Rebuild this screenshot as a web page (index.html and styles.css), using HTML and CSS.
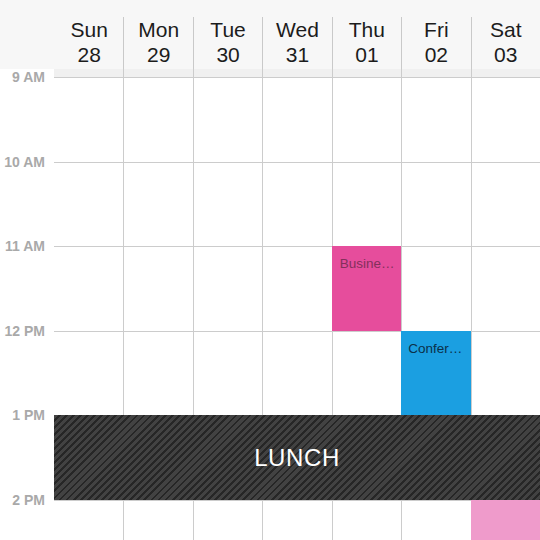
FILE: index.html
```html
<!DOCTYPE html>
<html>
<head>
<meta charset="utf-8">
<link rel="stylesheet" href="styles.css">
</head>
<body>
<div class="cal">
  <div class="header">
    <div class="corner"></div>
    <div class="day first"><span>Sun</span><span>28</span></div>
    <div class="day"><span>Mon</span><span>29</span></div>
    <div class="day"><span>Tue</span><span>30</span></div>
    <div class="day"><span>Wed</span><span>31</span></div>
    <div class="day"><span>Thu</span><span>01</span></div>
    <div class="day"><span>Fri</span><span>02</span></div>
    <div class="day"><span>Sat</span><span>03</span></div>
  </div>
  <div class="body">
    <div class="times">
      <div class="time">9 AM</div>
      <div class="time">10 AM</div>
      <div class="time">11 AM</div>
      <div class="time">12 PM</div>
      <div class="time">1 PM</div>
      <div class="time">2 PM</div>
    </div>
    <div class="grid">
      <div class="band"><i></i><i></i><i></i><i></i><i></i><i></i><i></i></div>
      <div class="row"><i></i><i></i><i></i><i></i><i></i><i></i><i></i></div>
      <div class="row"><i></i><i></i><i></i><i></i><i></i><i></i><i></i></div>
      <div class="row"><i></i><i></i><i></i><i></i><i></i><i></i><i></i></div>
      <div class="row"><i></i><i></i><i></i><i></i><i></i><i></i><i></i></div>
      <div class="row"><i></i><i></i><i></i><i></i><i></i><i></i><i></i></div>
      <div class="row last"><i></i><i></i><i></i><i></i><i></i><i></i><i></i></div>

      <div class="event business">Busine…</div>
      <div class="event conference">Confer…</div>
      <div class="event lunch">LUNCH</div>
      <div class="event sat"></div>
    </div>
  </div>
</div>
</body>
</html>
```

FILE: styles.css
```css
html, body {
  margin: 0;
  padding: 0;
  width: 540px;
  height: 540px;
  overflow: hidden;
  background: #fff;
}

.cal {
  font-family: "Liberation Sans", Arial, sans-serif;
  width: 540px;
  height: 540px;
  overflow: hidden;
}

.header {
  display: flex;
  height: 69px;
  background: #f7f7f7;
  box-sizing: border-box;
  padding-top: 17px;
}

.corner {
  width: 54px;
  flex: none;
}

.day {
  flex: 1;
  display: flex;
  flex-direction: column;
  align-items: center;
  border-left: 1px solid #c9c9c9;
  font-size: 21px;
  line-height: 25px;
  color: #1c1c1c;
}

.day.first {
  border-left-color: transparent;
}

.body {
  display: flex;
  height: 471px;
  overflow: hidden;
}

.times {
  width: 54px;
  flex: none;
}

.time {
  height: 84.5px;
  line-height: 17px;
  font-size: 14px;
  font-weight: bold;
  color: #a9a9a9;
  text-align: right;
  padding-right: 9px;
  box-sizing: border-box;
}

.time:last-child {
  height: 40px;
}

.grid {
  flex: 1;
  position: relative;
}

.band, .row {
  display: grid;
  grid-template-columns: repeat(7, 1fr);
}

.band {
  height: 8px;
  background: #f0f0f0;
}

.row {
  height: 84.5px;
  border-top: 1px solid #cccccc;
  box-sizing: border-box;
}

.row.last {
  height: 41px;
}

.band i, .row i {
  border-left: 1px solid #cccccc;
}

.band i:first-child, .row i:first-child {
  border-left: none;
}

.event {
  position: absolute;
  box-sizing: border-box;
  width: calc(100% / 7);
  height: 84.5px;
  font-size: 13.5px;
  line-height: 15px;
  padding: 10px 0 0 8px;
  white-space: nowrap;
  overflow: hidden;
}

.business {
  left: calc(100% / 7 * 4);
  top: 177px;
  background: #e64d9c;
  color: #83305b;
}

.conference {
  left: calc(100% / 7 * 5);
  top: 261.5px;
  background: #1b9fe1;
  color: #0b3049;
  padding-left: 7px;
}

.lunch {
  left: 0;
  width: 100%;
  top: 346px;
  display: flex;
  align-items: center;
  justify-content: center;
  padding: 0;
  font-size: 24px;
  letter-spacing: 0.6px;
  color: #ffffff;
  background: repeating-linear-gradient(135deg, #424242 0 3px, #262626 3px 5px);
}

.sat {
  left: calc(100% / 7 * 6);
  top: 430.5px;
  height: 41px;
  background: #ef9bcb;
}
```
